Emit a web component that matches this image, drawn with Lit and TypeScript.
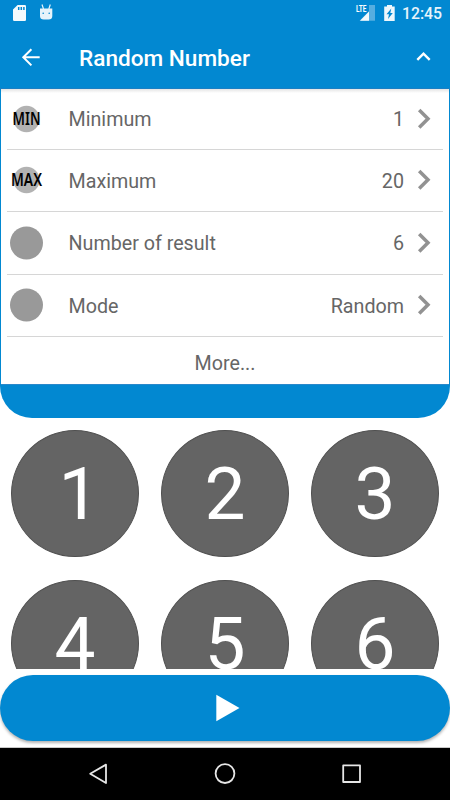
import { LitElement, html, css, svg, nothing } from "lit";
import { customElement } from "lit/decorators.js";
import { classMap } from "lit/directives/class-map.js";

interface Setting {
  label: string;
  value: string;
  badge?: string;
  badgeWidth?: number;
}

const SETTINGS: Setting[] = [
  { label: "Minimum", value: "1", badge: "MIN", badgeWidth: 28 },
  { label: "Maximum", value: "20", badge: "MAX", badgeWidth: 31 },
  { label: "Number of result", value: "6" },
  { label: "Mode", value: "Random" },
];

@customElement("app-root")
export class AppRoot extends LitElement {
  static styles = css`
    :host {
      display: flex;
      flex-direction: column;
      width: 450px;
      height: 800px;
      overflow: hidden;
      background: #fff;
      font-family: Roboto, "Liberation Sans", sans-serif;
      color: #666;
    }
    * { box-sizing: border-box; }
    svg { display: block; flex: none; overflow: visible; }
    .status {
      height: 27px;
      flex: none;
      display: flex;
      align-items: flex-start;
      background: #0288d1;
      color: #fff;
    }
    .grow { flex: 1; }
    .clock {
      width: 48px;
      padding-top: 4px;
      font-size: 15.8px;
      line-height: 20px;
      font-weight: 500;
      color: #e8f4fb;
    }
    .bar {
      height: 62px;
      flex: none;
      display: flex;
      align-items: center;
      background: #0288d1;
      border-bottom: 1px solid #1a7fc4;
      color: #fff;
    }
    .title {
      flex: 1;
      margin: 0;
      font-size: 22.6px;
      line-height: 28px;
      font-weight: 500;
      padding-top: 2px;
    }
    .panel {
      height: 329px;
      flex: none;
      background: #0288d1;
      border-radius: 0 0 32px 32px;
      padding: 0 1px;
    }
    .sheet {
      height: 296px;
      background: linear-gradient(#e4e4e4, #fff 4px);
      padding: 0 6px;
      border-bottom: 1px solid #2a88ca;
    }
    .row {
      height: 62.5px;
      display: flex;
      align-items: center;
      border-bottom: 1px solid #d6d6d6;
      font-size: 19.7px;
      line-height: 24px;
    }
    .row:first-child { height: 60.5px; }
    .icon { width: 40px; }
    .label { flex: 1; padding-left: 21.5px; padding-top: 3px; }
    .value { padding-top: 3px; }
    .row:first-child .label, .row:first-child .value { padding-top: 2px; }
    .chev { margin-left: 8px; margin-right: 7px; }
    .more {
      text-align: center;
      font-size: 19.7px;
      line-height: 24px;
      padding-top: 14.5px;
    }
    .results {
      height: 251px;
      flex: none;
      overflow: hidden;
      display: grid;
      grid-template-columns: repeat(3, 128px);
      grid-auto-rows: 127px;
      column-gap: 22px;
      row-gap: 23px;
      padding: 12px 11px 0;
    }
    .ball {
      border-radius: 50%;
      background: #646464;
      border: 1px solid #505050;
      color: #fff;
      font-size: 73px;
      line-height: 127px;
      text-align: center;
    }
    .ball.one { padding-left: 8px; }
    .play {
      height: 66px;
      flex: none;
      margin-top: 6px;
      border-radius: 33px;
      background: #0288d1;
      box-shadow: 0 2px 3px rgba(0, 0, 0, 0.3);
      display: flex;
      align-items: center;
      justify-content: center;
      padding-left: 6px;
    }
    .nav {
      height: 53px;
      flex: none;
      margin-top: 6px;
      border-top: 1px solid #c8c8c8;
      background: #000;
    }
  `;

  private badge(s: Setting) {
    return html`<svg class="icon" width="40" height="36" viewBox="0 0 40 36">
      <circle cx="19.5" cy="18" r=${s.badge ? 13.2 : 16.5} fill=${s.badge ? "#b2b2b2" : "#999"} />
      ${s.badge
        ? svg`<text x="19.5" y="24" text-anchor="middle" textLength=${s.badgeWidth}
            lengthAdjust="spacingAndGlyphs" font-family="Noto Sans, sans-serif"
            font-size="17" font-weight="600" fill="#000">${s.badge}</text>`
        : nothing}
    </svg>`;
  }

  private row(s: Setting) {
    return html`<div class="row">
      ${this.badge(s)}
      <span class="label">${s.label}</span>
      <span class="value">${s.value}</span>
      <svg class="chev" width="24" height="24" viewBox="0 0 24 24" fill="none" stroke="#929292" stroke-width="3.5">
        <path d="M7.2 2.9 L16 11.7 L7.2 20.5" />
      </svg>
    </div>`;
  }

  render() {
    return html`
      <div class="status">
        <svg width="60" height="27" viewBox="0 0 60 27">
          <path fill="#f4fafd" d="M17.6 5 H24.8 Q26 5 26 6.2 V19.8 Q26 21 24.8 21 H14.2 Q13 21 13 19.8 V9.6 Z" />
          <path stroke="#0288d1" stroke-width="1.5" d="M18.7 7 V10 M21.3 7 V10 M23.9 7 V10" />
          <path fill="#e6f3fa" d="M40 8.6 H52.3 V16 Q52.3 19.5 48.5 19.5 H43.8 Q40 19.5 40 16 Z" />
          <path stroke="#e6f3fa" stroke-width="1.2" d="M42 4.5 L43.5 9 M50.3 4.5 L48.8 9" />
          <circle cx="43.2" cy="13.2" r=".8" fill="#0288d1" />
          <circle cx="49.2" cy="13.2" r=".8" fill="#0288d1" />
        </svg>
        <span class="grow"></span>
        <svg width="47" height="27" viewBox="0 0 47 27">
          <path fill="#56aee0" d="M20 5 V20.8 H4.5 L14 11.3 V5 Z" />
          <path fill="#f4fafd" d="M14 11.6 V20.8 H5 Z" />
          <text x="1" y="11.8" font-family="Roboto, sans-serif" font-size="9" font-weight="700"
            textLength="10.5" lengthAdjust="spacingAndGlyphs" fill="#fff">LTE</text>
          <path fill="#eef7fc" d="M32 5 H37 V6.5 H39.7 V21 H29.2 V6.5 H32 Z" />
          <path fill="#0288d1" d="M36.3 8.5 L31.5 14.3 H34 L33 19 L37.8 13 H35.3 Z" />
        </svg>
        <span class="clock">12:45</span>
      </div>
      <header class="bar">
        <svg width="79" height="60" viewBox="0 0 79 60" fill="none" stroke="#fff" stroke-width="2">
          <path d="M39.7 29.3 H23.5 M31.4 21.2 L23.3 29.3 L31.4 37.4" />
        </svg>
        <h1 class="title">Random Number</h1>
        <svg width="53" height="60" viewBox="0 0 53 60" fill="none" stroke="#fff" stroke-width="2.4">
          <path d="M20.3 31.9 L26.5 25.7 L32.7 31.9" />
        </svg>
      </header>
      <section class="panel">
        <div class="sheet">
          ${SETTINGS.map((s) => this.row(s))}
          <div class="more">More...</div>
        </div>
      </section>
      <main class="results">
        ${[1, 2, 3, 4, 5, 6].map(
          (n) => html`<div class=${classMap({ ball: true, one: n === 1 })}>${n}</div>`
        )}
      </main>
      <div class="play">
        <svg width="26" height="28" viewBox="0 0 26 28">
          <path fill="#fff" d="M1.3 .8 L24.5 14 L1.3 27.2 Z" />
        </svg>
      </div>
      <nav class="nav">
        <svg width="450" height="52" viewBox="0 0 450 52" fill="none" stroke="#e6e6e6" stroke-width="1.8" stroke-linejoin="round">
          <path d="M106 16.6 V35 L90.2 25.8 Z" />
          <circle cx="225" cy="25.6" r="9.4" />
          <rect x="343.2" y="17.4" width="16.8" height="16.6" />
        </svg>
      </nav>
    `;
  }
}
